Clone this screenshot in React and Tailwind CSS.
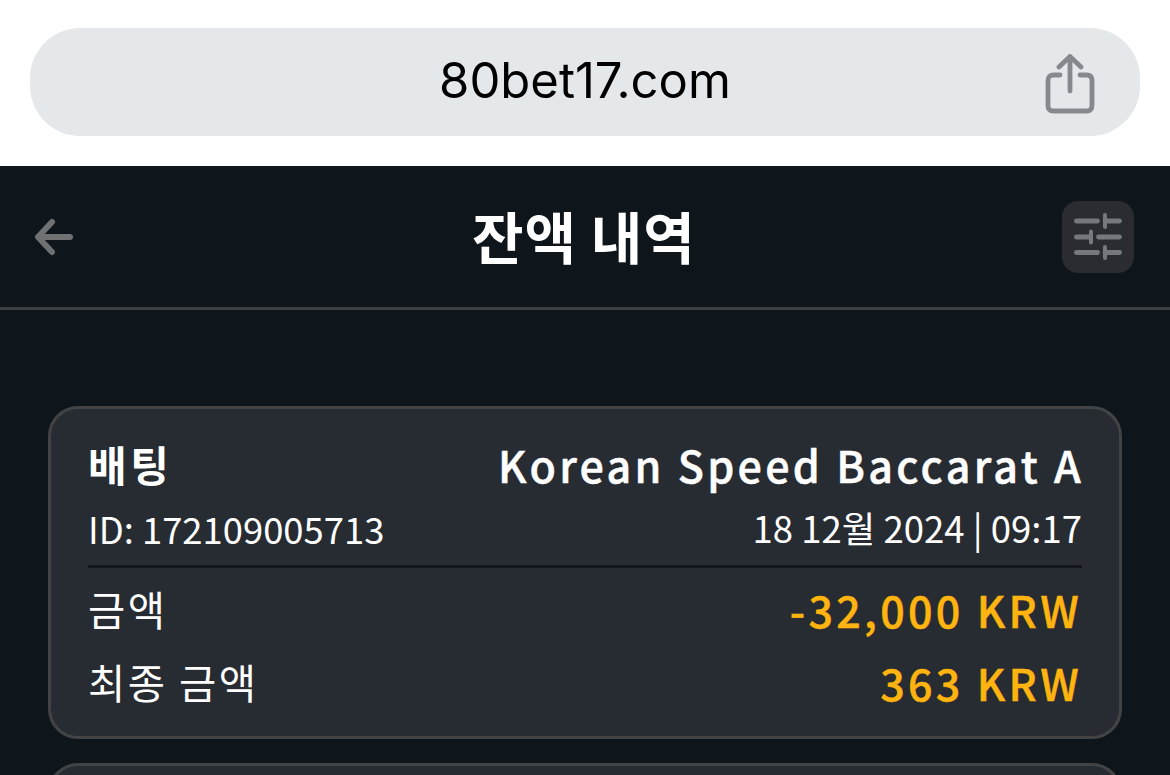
import React from 'react';

const FONT = "font-['Noto_Sans_CJK_KR','Noto_Sans',sans-serif]";

const ShareIcon = () => (
  <svg width="50" height="60" viewBox="0 0 50 60" fill="none" stroke="#85898d" strokeWidth="4.800" strokeLinecap="round" strokeLinejoin="round">
    <path d="M25 37V3" />
    <path d="M14 13L25 2.500L36 13" />
    <path d="M15 21H8.500Q3 21 3 26.500V51.500Q3 57 8.500 57H41.500Q47 57 47 51.500V26.500Q47 21 41.500 21H35" />
  </svg>
);

const BackIcon = () => (
  <svg width="40" height="38" viewBox="0 0 40 38" fill="none" stroke="#6f7072" strokeWidth="6" strokeLinecap="round" strokeLinejoin="round">
    <path d="M36 19H5" />
    <path d="M18 4L4 19L18 34" />
  </svg>
);

const SlidersIcon = () => (
  <svg width="48" height="48" viewBox="0 0 48 48" fill="none" stroke="#76787b" strokeLinecap="round">
    <g strokeWidth="4.800">
      <path d="M2.400 8H23.500" />
      <path d="M31 8H45.500" />
      <path d="M2.400 24H16" />
      <path d="M24.500 24H45.500" />
      <path d="M2.400 39.500H23.500" />
      <path d="M31 39.500H45.500" />
    </g>
    <g strokeWidth="4">
      <path d="M31 2V14" />
      <path d="M17 18.500V29.500" />
      <path d="M31 34V45" />
    </g>
  </svg>
);

const Row = ({ label, value }) => (
  <div className="flex items-center justify-between h-[73px]">
    <span className="text-[40.500px] leading-none text-white tracking-[2.500px]">{label}</span>
    <span className="text-[43px] leading-none font-medium tracking-[3.300px] text-[#ffb40f] [-webkit-text-stroke:0.5px_#ffb40f]">{value}</span>
  </div>
);

export default function App() {
  return (
    <div className={`w-[1170px] h-[775px] overflow-hidden bg-[#0e151b] ${FONT}`}>
      {/* Barre du navigateur */}
      <div className="h-[166px] bg-white px-[30px] pt-[28px]">
        <div className="relative flex items-center justify-center h-[108px] rounded-[50px] bg-[#e5e8eb]">
          <span className="font-['Inter',sans-serif] text-[49px] leading-none text-black mb-[4px]">80bet17.com</span>
          <div className="absolute right-[45px] top-[26px]">
            <ShareIcon />
          </div>
        </div>
      </div>

      {/* En-tête */}
      <div className="flex items-center justify-between h-[144px] pl-[34px] pr-[36px] border-b-[3px] border-[#3c3e40]">
        <div className="w-[72px]">
          <BackIcon />
        </div>
        <span className="text-[56px] leading-none font-bold text-white tracking-[1px] mb-[4px]">잔액 내역</span>
        <div className="flex items-center justify-center w-[72px] h-[72px] rounded-[16px] bg-[#2a2c31]">
          <SlidersIcon />
        </div>
      </div>

      {/* Liste */}
      <div className="flex flex-col gap-[24px] px-[48px] pt-[96px]">
        <div className="h-[333px] rounded-[30px] border-[3px] border-[#424345] bg-[#272b32] px-[37px] pt-[27px]">
          <div className="flex items-center justify-between h-[56px]">
            <span className="text-[42px] leading-none font-bold text-white tracking-[3.500px]">배팅</span>
            <span className="text-[43px] leading-none font-medium text-white tracking-[3.300px] -mr-[2px] [-webkit-text-stroke:0.5px_#ffffff]">Korean Speed Baccarat A</span>
          </div>
          <div className="flex items-center justify-between h-[76px] pb-[1px] mb-[5px] border-b-[3px] border-[#14161f]">
            <span className="text-[36.400px] leading-none text-white">ID: 172109005713</span>
            <span className="text-[36.500px] leading-none text-white">18 12월 2024 | 09:17</span>
          </div>
          <Row label="금액" value="-32,000 KRW" />
          <Row label="최종 금액" value="363 KRW" />
        </div>
        <div className="h-[100px] rounded-[30px] border-[3px] border-[#424345] bg-[#272b32]" />
      </div>
    </div>
  );
}
